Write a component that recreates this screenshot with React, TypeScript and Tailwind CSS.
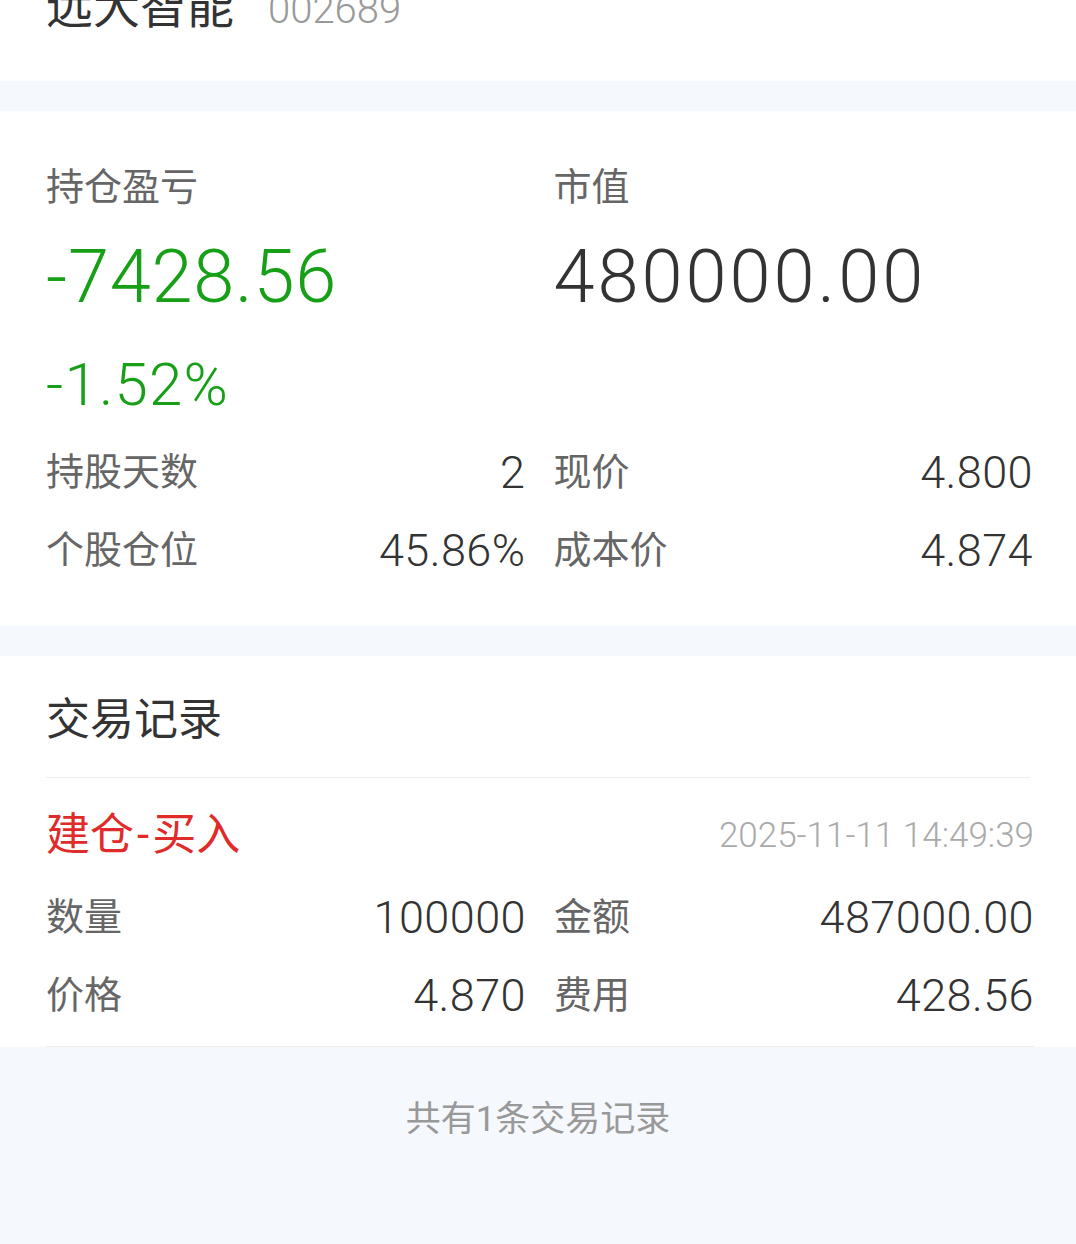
import React from "react";

const font = { fontFamily: 'Roboto, "Noto Sans CJK SC", sans-serif' };

const summaryRows = [
  [
    { label: "持股天数", value: "2" },
    { label: "现价", value: "4.800" },
  ],
  [
    { label: "个股仓位", value: "45.86%" },
    { label: "成本价", value: "4.874" },
  ],
];

const tradeRows = [
  [
    { label: "数量", value: "100000" },
    { label: "金额", value: "487000.00" },
  ],
  [
    { label: "价格", value: "4.870" },
    { label: "费用", value: "428.56" },
  ],
];

function InfoGrid({ rows }: { rows: { label: string; value: string }[][] }) {
  return (
    <div className="flex flex-col">
      {rows.map((row, i) => (
        <div key={i} className="grid grid-cols-2 gap-x-[28px] h-[78px]">
          {row.map((cell) => (
            <div key={cell.label} className="flex items-center justify-between">
              <span className="text-[38px] leading-none text-[#666]">{cell.label}</span>
              <span className="text-[45px] leading-none font-light tracking-[0.01em] text-[#333]">{cell.value}</span>
            </div>
          ))}
        </div>
      ))}
    </div>
  );
}

export default function App() {
  return (
    <div className="min-h-[1244px] bg-[#f5f8fc]" style={font}>
      {/* header, scrolled partly out of view */}
      <div className="h-[81px] bg-white overflow-hidden pl-[46px]">
        <div className="flex items-baseline gap-[34px] -mt-[17px]">
          <span className="text-[47px] leading-none text-[#333]">远大智能</span>
          <span className="text-[40px] leading-none font-light text-[#999]">002689</span>
        </div>
      </div>

      {/* position summary */}
      <div className="mt-[30px] bg-white pl-[46px] pr-[43px] pt-[57px] pb-[37px]">
        <div className="grid grid-cols-2 gap-x-[28px]">
          <div className="flex flex-col">
            <span className="text-[38px] leading-none text-[#666]">持仓盈亏</span>
            <span className="mt-[34px] text-[74px] leading-none font-light tracking-[0.01em] text-[#17a017]">-7428.56</span>
            <span className="mt-[41px] text-[60px] leading-none font-light tracking-[0.02em] text-[#17a017]">-1.52%</span>
          </div>
          <div className="flex flex-col">
            <span className="text-[38px] leading-none text-[#666]">市值</span>
            <span className="mt-[34px] text-[74px] leading-none font-light tracking-[0.04em] text-[#333]">480000.00</span>
          </div>
        </div>
        <div className="mt-[18px]">
          <InfoGrid rows={summaryRows} />
        </div>
      </div>

      {/* trade records */}
      <div className="mt-[30px] bg-white">
        <div className="mx-[46px] pt-[42px] pb-[35px] border-b border-[#eeeeee]">
          <span className="text-[44px] leading-none text-[#333]">交易记录</span>
        </div>
        <div className="ml-[46px] mr-[42px] pt-[35px] pb-[12px] border-b border-[#eeeeee]">
          <div className="flex items-center justify-between">
            <span className="text-[44px] leading-none text-[#e02b2b]">
              建仓<span className="px-[3px]">-</span>买入
            </span>
            <span className="text-[35px] leading-none font-light text-[#aaa]">2025-11-11 14:49:39</span>
          </div>
          <div className="mt-[21px]">
            <InfoGrid rows={tradeRows} />
          </div>
        </div>
      </div>

      <div className="pt-[55px] text-center text-[35px] leading-none text-[#999]">共有1条交易记录</div>
    </div>
  );
}
